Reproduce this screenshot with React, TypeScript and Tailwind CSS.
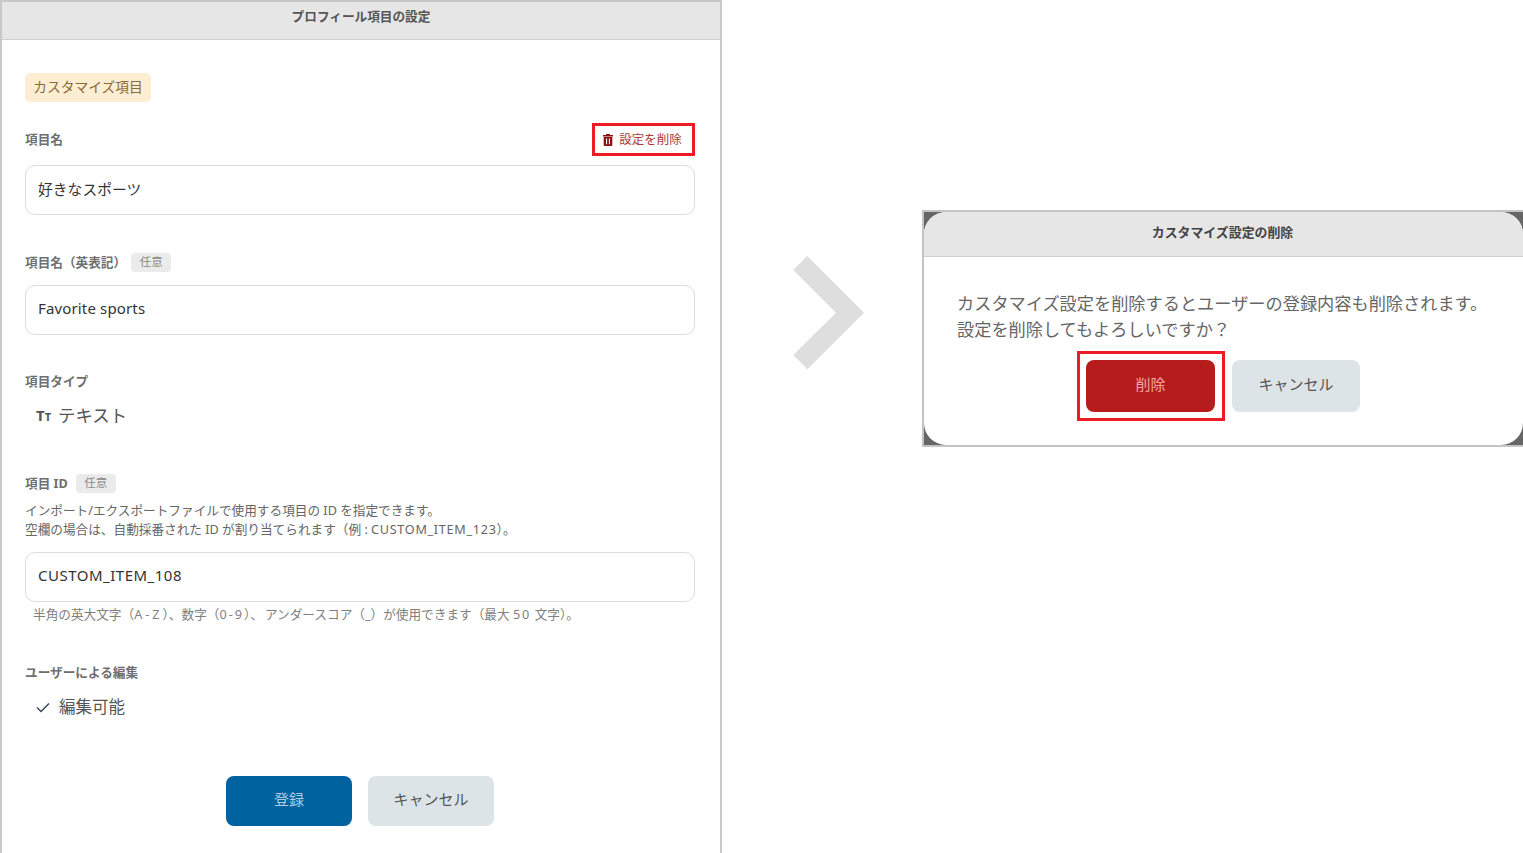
const fontStack = '[font-family:"Noto_Sans","Noto_Sans_CJK_JP",sans-serif]';

function OptionalTag() {
  return (
    <span className="flex h-[19px] w-10 items-center justify-center rounded bg-[#ebebeb] text-[11.5px] text-[#8a8a8a]">
      任意
    </span>
  );
}

function Label({ children }: { children: React.ReactNode }) {
  return <span className="text-[12.65px] font-bold text-[#6f6f6f]">{children}</span>;
}

function TextBox({ value, className }: { value: string; className: string }) {
  return (
    <div className="flex h-[50px] items-center rounded-[10px] border border-[#dcdcdc] bg-white px-3 text-[15px] text-[#333]">
      <span className={className}>{value}</span>
    </div>
  );
}

function TrashIcon() {
  return (
    <svg width="10" height="12" viewBox="0 0 10 12" className="shrink-0">
      <path d="M3.4 0h3.2l.5 1H10v1.4H0V1h2.9z" fill="#8c1212" />
      <path
        fillRule="evenodd"
        d="M.7 3h8.6v8a1 1 0 0 1-1 1H1.7a1 1 0 0 1-1-1zM3 4.6v5.6h1.1V4.6zm2.9 0v5.6H7V4.6z"
        fill="#8c1212"
      />
    </svg>
  );
}

function ProfileItemForm() {
  return (
    <section className="flex h-[853px] w-[722px] shrink-0 flex-col border-x-2 border-[#c8c8c8] border-b-0">
      <header className="flex h-10 shrink-0 items-start justify-center border-t-2 border-b border-[#c8c8c8] border-b-[#cfcfcf] bg-[#e6e6e6] pt-[4.5px] text-[12.65px] font-bold text-[#555]">
        プロフィール項目の設定
      </header>

      <div className="flex flex-1 flex-col pl-[23px] pr-[25px] pt-[33px]">
        <div className="flex h-[29px] w-[126px] items-center justify-center rounded-[5px] bg-[#fcedd3] text-[13.75px] text-[#8b6a33]">
          カスタマイズ項目
        </div>

        <div className="mt-[21px] flex h-[33px] items-center justify-between">
          <Label>項目名</Label>
          <div className="flex h-[33px] w-[103px] items-center justify-center gap-1.5 border-[3px] border-[#ed1c24] pr-0.5 text-[12.5px] text-[#a83a3a]">
            <TrashIcon />
            <span className="mt-0.5">設定を削除</span>
          </div>
        </div>
        <div className="mt-[9px]">
          <TextBox value="好きなスポーツ" className="mb-px text-[14.8px]" />
        </div>

        <div className="mt-[37px] flex h-[20px] items-center gap-[5px]">
          <Label>項目名（英表記）</Label>
          <OptionalTag />
        </div>
        <div className="mt-[13px]">
          <TextBox value="Favorite sports" className="mb-[3px] tracking-[0.15px]" />
        </div>

        <div className="mt-[36px] flex h-5 items-center">
          <Label>項目タイプ</Label>
        </div>
        <div className="mt-[13px] flex h-[22px] items-center gap-[7px] pl-[11px] text-[17.4px] text-[#555]">
          <span className="text-[15px] font-bold leading-none text-[#555]">
            T<span className="text-[11px]">T</span>
          </span>
          テキスト
        </div>

        <div className="mt-[47px] flex h-5 items-center gap-2">
          <Label>項目 ID</Label>
          <OptionalTag />
        </div>
        <p className="mt-2 text-[12.65px] leading-[19px] text-[#666]">
          インポート/エクスポートファイルで使用する項目の ID を指定できます。
          <br />
          空欄の場合は、自動採番された ID が割り当てられます（例 :{' '}
          <span className="tracking-[0.7px]">CUSTOM_ITEM_123</span>）。
        </p>
        <div className="mt-[13px]">
          <TextBox value="CUSTOM_ITEM_108" className="mb-[3px] tracking-[0.5px]" />
        </div>
        <p className="mt-0.5 h-5 pl-2 text-[12.65px] leading-5 text-[#808080]">
          半角の英大文字（<span className="tracking-[3px]">A-Z</span>）、数字（
          <span className="tracking-[2px]">0-9</span>）、
          <span className="ml-0.5">アンダースコア（_）が使用できます（最大 </span>
          <span className="tracking-[2px]">50</span> 文字）。
        </p>

        <div className="mt-[38px] flex h-5 items-center">
          <Label>ユーザーによる編集</Label>
        </div>
        <div className="mt-[14px] flex h-[22px] items-center gap-[9px] pl-[11px] text-[16.5px] text-[#555]">
          <svg width="14" height="11" viewBox="0 0 14 11" fill="none" stroke="#37474f" strokeWidth="1.5">
            <path d="M1 5.5 5 9.5 13 1.5" />
          </svg>
          編集可能
        </div>

        <div className="mt-[58px] flex justify-center gap-4">
          <div className="flex h-[50px] w-[126px] items-center justify-center rounded-lg bg-[#0063a0] pb-1 text-[15px] text-[#a9cbe3]">
            登録
          </div>
          <div className="flex h-[50px] w-[126px] items-center justify-center rounded-lg bg-[#dce4e7] pb-1 text-[15px] text-[#555]">
            キャンセル
          </div>
        </div>
      </div>
    </section>
  );
}

function DeleteDialog() {
  return (
    <section className="h-[237px] w-[601px] shrink-0 border-2 border-r-0 border-[#c4c4c4] bg-[#666]">
      <div className="flex h-full flex-col overflow-hidden rounded-[22px] bg-white">
        <header className="flex h-[45px] shrink-0 items-center justify-center border-b border-[#cfcfcf] bg-[#e6e6e6] pb-0.5 pr-0.5 text-[12.9px] font-bold text-[#444]">
          カスタマイズ設定の削除
        </header>
        <div className="flex flex-1 flex-col px-[33px] pt-[34px]">
          <p className="whitespace-nowrap text-[17.2px] leading-[26px] text-[#666]">
            カスタマイズ設定を削除するとユーザーの登録内容も削除されます。
            <br />
            設定を削除してもよろしいですか？
          </p>
          <div className="mt-2 flex items-center justify-center gap-[7px] pr-2.5">
            <div className="flex h-[70px] w-[148px] items-center border-[3px] border-[#ed1c24] pl-1.5">
              <div className="flex h-[52px] w-[129px] items-center justify-center rounded-lg bg-[#b71c1c] pb-1 text-[15px] text-[#f0a6a6]">
                削除
              </div>
            </div>
            <div className="flex h-[52px] w-[128px] items-center justify-center rounded-lg bg-[#dce4e7] pb-1 text-[15px] text-[#555]">
              キャンセル
            </div>
          </div>
        </div>
      </div>
    </section>
  );
}

export default function App() {
  return (
    <div className={`flex h-[853px] w-[1523px] overflow-hidden bg-white ${fontStack}`}>
      <ProfileItemForm />
      <div className="flex h-[628px] w-[200px] shrink-0 items-center justify-center">
        <svg width="72" height="116" viewBox="0 0 72 116" className="ml-3.5" fill="#dedede">
          <path d="M.3 14 14.3 0 71 56.7 14.3 113.3 .3 99 43 56.7z" />
        </svg>
      </div>
      <div className="pt-[210px]">
        <DeleteDialog />
      </div>
    </div>
  );
}
